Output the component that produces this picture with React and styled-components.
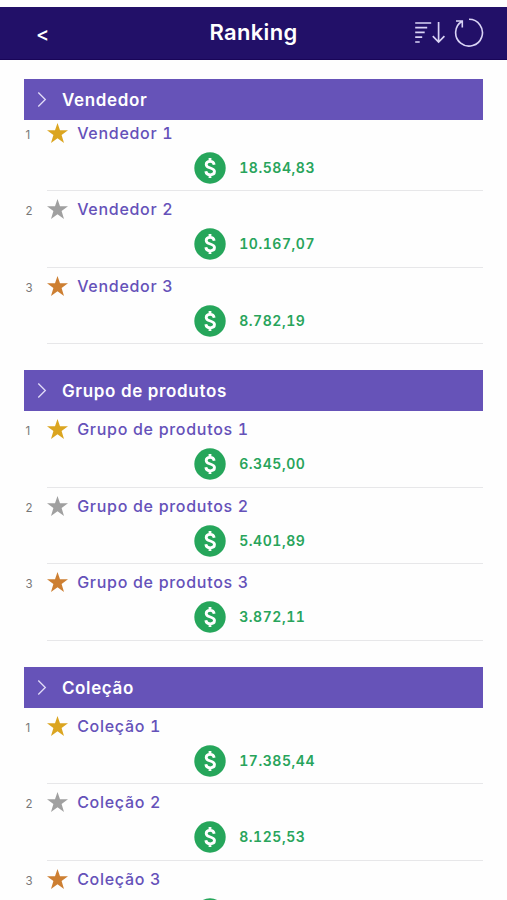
import React from 'react'
import styled, { createGlobalStyle } from 'styled-components'

const GlobalStyle = createGlobalStyle`
  * {
    box-sizing: border-box;
  }

  body {
    margin: 0;
    background: #fefefe;
    font-family: Inter, 'Liberation Sans', sans-serif;
  }
`

const Screen = styled.div`
  height: 900px;
  overflow: hidden;
  padding-top: 7px;
`

const TopBar = styled.header`
  display: grid;
  grid-template-columns: 1fr auto 1fr;
  align-items: center;
  height: 52.5px;
  padding: 0 23px 0 36px;
  color: #fff;
  background: #221068;
  border-bottom: 1px solid #190558;
`

const BackButton = styled.button`
  display: flex;
  width: 12px;
  padding: 2px 0 0;
  border: 0;
  color: inherit;
  background: none;
  font: 500 20px Inter, sans-serif;
`

const PageTitle = styled.h1`
  margin: 0 13px 1px 0;
  font-size: 22px;
  line-height: 28px;
  font-weight: 600;
  letter-spacing: 0.3px;
`

const Actions = styled.div`
  display: flex;
  justify-content: flex-end;
  align-items: center;
  gap: 8px;
`

const Content = styled.main`
  display: flex;
  flex-direction: column;
  gap: 26.2px;
  padding: 19.2px 23.7px 0 24.4px;
`

const SectionHeader = styled.div`
  display: flex;
  align-items: center;
  gap: 13.5px;
  height: 41px;
  padding: 1px 12px 0;
  color: #fff;
  background: #6653b8;
`

const SectionTitle = styled.h2`
  margin: 0;
  font-size: 17px;
  line-height: 22px;
  font-weight: 600;
  letter-spacing: 0.65px;
`

const Rows = styled.div`
  margin-top: ${props => (props.$tight ? '-4.7px' : 0)};
`

const Row = styled.div`
  display: grid;
  grid-template-columns: 22.8px 1fr;
  height: 76.4px;
`

const Position = styled.span`
  padding: 13px 0 0 1px;
  color: #777;
  font-size: 11.5px;
  line-height: 14px;
`

const RowBody = styled.div`
  display: flex;
  flex-direction: column;
  border-bottom: 1px solid #e7e7e9;
`

const NameLine = styled.div`
  display: flex;
  align-items: center;
  gap: 9px;
  height: 36px;
`

const Name = styled.span`
  color: #6551b9;
  font-size: 16px;
  line-height: 22px;
  font-weight: 500;
  font-variant-numeric: tabular-nums;
  letter-spacing: 0.7px;
`

const ValueLine = styled.div`
  display: flex;
  align-items: center;
  gap: 13px;
  padding-left: 147px;
  height: 34px;
`

const Value = styled.span`
  color: #28a45b;
  font-size: 14px;
  line-height: 18px;
  font-weight: 600;
  font-variant-numeric: tabular-nums;
  letter-spacing: 0.55px;
`

const medals = ['#dba520', '#a0a0a0', '#cd7f32']

const sections = [
  { title: 'Vendedor', tight: true, values: ['18.584,83', '10.167,07', '8.782,19'] },
  { title: 'Grupo de produtos', values: ['6.345,00', '5.401,89', '3.872,11'] },
  { title: 'Coleção', values: ['17.385,44', '8.125,53', null] }
]

const SortIcon = () => (
  <svg width="32" height="26" viewBox="0 0 32 26" fill="none" stroke="#d9d3f5" strokeWidth="1.7">
    <path d="M1.2 3h16M1.2 7.7h12M1.2 12.4h9.5M1.2 17.2h7M1.2 22h4.5M24.6 2v20M18.8 16.2l5.8 5.8 5.8-5.8" />
  </svg>
)

const RefreshIcon = () => (
  <svg width="30" height="30" viewBox="0 0 30 30" fill="none" stroke="#d9d3f5" strokeWidth="1.6">
    <path d="M15 1.3A13.4 13.4 0 1 1 8 3.3M2 3h6.3v6.5" />
  </svg>
)

const Chevron = () => (
  <svg width="12" height="18" viewBox="0 0 12 18" fill="none" stroke="#e2dcf8" strokeWidth="1.3">
    <path d="M2.3 1.5l7 7-7 7" />
  </svg>
)

const Star = ({ color }) => (
  <svg width="21" height="20" viewBox="0 0 21 20" fill={color}>
    <path d="M10.5 0l2.5 7.2 8 .1-6.4 4.8 2.4 7.9-6.5-4.7L4 20l2.4-7.9L0 7.3l8-.1z" />
  </svg>
)

const Coin = () => (
  <svg width="32" height="32" viewBox="0 0 32 32" fill="none">
    <circle cx="16" cy="16" r="15.7" fill="#26a65b" />
    <path
      d="M20.2 12.7c-.4-2.2-1.9-3.3-4.1-3.3-2.4 0-3.9 1.2-3.9 3.1 0 4.6 8.3 2.4 8.3 7.1 0 2-1.7 3.2-4.2 3.2-2.6 0-4.2-1.2-4.5-3.5M16 6v3.5M16 22.5V26"
      stroke="#fff"
      strokeWidth="2.8"
    />
  </svg>
)

const Section = ({ title, values, tight }) => (
  <section>
    <SectionHeader>
      <Chevron />
      <SectionTitle>{title}</SectionTitle>
    </SectionHeader>
    <Rows $tight={tight}>
      {values.map((value, i) => (
        <Row key={i}>
          <Position>{i + 1}</Position>
          <RowBody>
            <NameLine>
              <Star color={medals[i]} />
              <Name>{title} {i + 1}</Name>
            </NameLine>
            <ValueLine>
              <Coin />
              {value && <Value>{value}</Value>}
            </ValueLine>
          </RowBody>
        </Row>
      ))}
    </Rows>
  </section>
)

export default function App() {
  return (
    <Screen>
      <GlobalStyle />
      <TopBar>
        <BackButton>&lt;</BackButton>
        <PageTitle>Ranking</PageTitle>
        <Actions>
          <SortIcon />
          <RefreshIcon />
        </Actions>
      </TopBar>
      <Content>
        {sections.map(section => (
          <Section key={section.title} {...section} />
        ))}
      </Content>
    </Screen>
  )
}
